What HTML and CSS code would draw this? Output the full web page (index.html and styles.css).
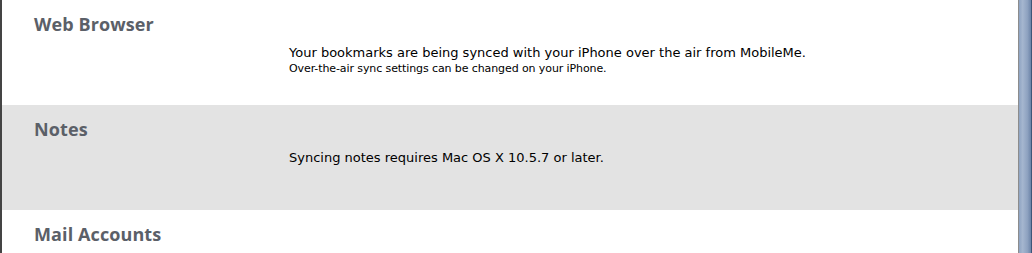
FILE: index.html
```html
<!DOCTYPE html>
<html>
<head>
<meta charset="utf-8">
<link rel="stylesheet" href="styles.css">
</head>
<body>
<div class="window">
  <div class="content">
    <section class="row">
      <h2 class="title">Web Browser</h2>
      <div class="body">
        <p class="msg">Your bookmarks are being synced with your iPhone over the air from MobileMe.</p>
        <p class="note">Over-the-air sync settings can be changed on your iPhone.</p>
      </div>
    </section>
    <section class="row row-alt">
      <h2 class="title">Notes</h2>
      <div class="body">
        <p class="msg">Syncing notes requires Mac OS X 10.5.7 or later.</p>
      </div>
    </section>
    <section class="row">
      <h2 class="title">Mail Accounts</h2>
    </section>
  </div>
  <div class="scrollbar"></div>
</div>
</body>
</html>
```

FILE: styles.css
```css
html, body {
  margin: 0;
  padding: 0;
  background: #ffffff;
}
body {
  font-family: "DejaVu Sans", "Liberation Sans", sans-serif;
  width: 1032px;
  height: 253px;
  overflow: hidden;
}
.window {
  display: flex;
  height: 253px;
  border-left: 2px solid #444444;
  box-sizing: border-box;
}
.content {
  flex: 1;
  display: flex;
  flex-direction: column;
  overflow: hidden;
}
.row {
  height: 105px;
  flex: none;
  box-sizing: border-box;
  padding: 13px 0 0 32px;
  background: #ffffff;
}
.row-alt {
  background: #e3e3e3;
}
.title {
  margin: 0;
  font-family: "Open Sans", "DejaVu Sans", sans-serif;
  font-size: 18px;
  font-weight: bold;
  color: #5b6068;
  line-height: 22px;
  letter-spacing: 0.1px;
}
.body {
  padding-left: 255px;
  margin-top: 10px;
}
.msg {
  margin: 0;
  font-size: 13px;
  line-height: 16px;
  color: #000000;
}
.note {
  margin: 0;
  font-size: 11px;
  line-height: 15px;
  letter-spacing: -0.1px;
  color: #000000;
}
.scrollbar {
  width: 14px;
  flex: none;
  box-sizing: border-box;
  border-left: 1px solid #8c8c8c;
  border-right: 1px solid #3d5679;
  background: linear-gradient(to right, #8fa4c2 0%, #a5b6cf 30%, #8ea2c0 70%, #6c84a8 100%);
}
```
